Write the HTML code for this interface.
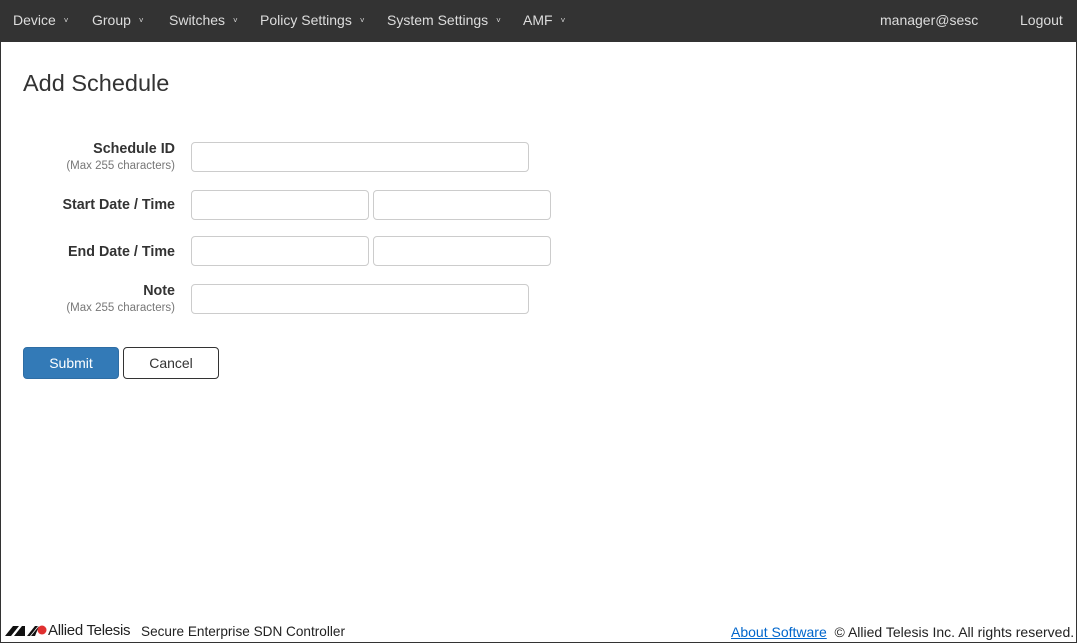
<!DOCTYPE html>
<html><head><meta charset="utf-8"><style>
*{box-sizing:border-box;margin:0;padding:0}
html,body{width:1077px;height:643px;overflow:hidden;background:#fff;font-family:"Liberation Sans",sans-serif;color:#333}
.frame{position:absolute;left:0;top:0;width:1077px;height:643px;border:1px solid #333}
.nav{position:absolute;left:0;top:0;width:1077px;height:42px;background:#333;}
.nav span{position:absolute;top:12px;font-size:14px;color:#ddd;white-space:nowrap}
.nav span i{font-style:normal;font-size:8px;margin-left:8px;position:relative;top:-2px}
h1{position:absolute;left:23px;top:70px;font-size:23.5px;font-weight:normal;color:#333}
.lbl{position:absolute;right:902px;text-align:right;font-size:14.3px;font-weight:bold;color:#333;white-space:nowrap}
.sub{position:absolute;right:902px;text-align:right;font-size:11.5px;color:#777;white-space:nowrap}
.in{position:absolute;height:30px;border:1px solid #ccc;border-radius:4px}
.btn{position:absolute;top:347px;height:32px;border-radius:4px;font-size:14px;text-align:center;line-height:30px}
.foot{position:absolute;top:624px;font-size:13.6px;color:#222;white-space:nowrap}
</style></head><body>
<div class="nav">
<span style="left:13px">Device<i>˅</i></span>
<span style="left:92px">Group<i>˅</i></span>
<span style="left:169px">Switches<i>˅</i></span>
<span style="left:260px">Policy Settings<i>˅</i></span>
<span style="left:387px">System Settings<i>˅</i></span>
<span style="left:523px">AMF<i>˅</i></span>
<span style="left:880px">manager@sesc</span>
<span style="left:1020px">Logout</span>
</div>
<h1>Add Schedule</h1>
<div class="lbl" style="top:141px">Schedule ID</div>
<div class="sub" style="top:160px">(Max 255 characters)</div>
<div class="in" style="left:191px;top:142px;width:338px"></div>
<div class="lbl" style="top:197px">Start Date / Time</div>
<div class="in" style="left:191px;top:190px;width:178px"></div>
<div class="in" style="left:373px;top:190px;width:178px"></div>
<div class="lbl" style="top:244px">End Date / Time</div>
<div class="in" style="left:191px;top:236px;width:178px"></div>
<div class="in" style="left:373px;top:236px;width:178px"></div>
<div class="lbl" style="top:283px">Note</div>
<div class="sub" style="top:302px">(Max 255 characters)</div>
<div class="in" style="left:191px;top:284px;width:338px"></div>
<div class="btn" style="left:23px;width:96px;background:#337ab7;border:1px solid #2e6da4;color:#fff">Submit</div>
<div class="btn" style="left:123px;width:96px;background:#fff;border:1px solid #333;color:#333">Cancel</div>
<svg style="position:absolute;left:5px;top:623px" width="42" height="14" viewBox="0 0 42 14">
<polygon points="0,13 8,3 14,3 6,13" fill="#111"/>
<polygon points="9,13 17,3 20,3 20,13" fill="#111"/>
<polygon points="22,13 30,3 33,3 25,13" fill="#111"/>
<polygon points="26,13 34,3 30,13" fill="#111"/>
<circle cx="37" cy="7" r="4.5" fill="#e03030"/>
</svg>
<div class="foot" style="left:48px;top:622px;font-size:15px;letter-spacing:-0.3px">Allied Telesis</div>
<div class="foot" style="left:141px">Secure Enterprise SDN Controller</div>
<div class="foot" style="left:731px;font-size:14px"><span style="color:#0066cc;text-decoration:underline">About Software</span>&nbsp; © Allied Telesis Inc. All rights reserved.</div>
<div class="frame"></div>
</body></html>
